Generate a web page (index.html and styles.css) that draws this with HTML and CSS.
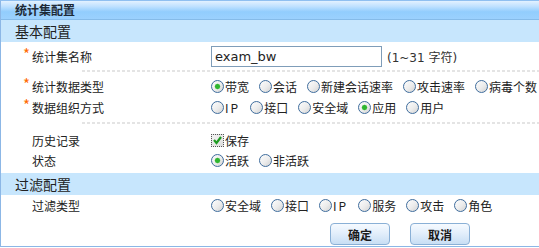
FILE: index.html
```html
<!DOCTYPE html>
<html lang="zh-CN">
<head>
	<meta charset="UTF-8">
	<title>统计集配置</title>
	<link rel="stylesheet" href="styles.css">
</head>
<body>
	<div class="panel">
		<div class="panel-title">统计集配置</div>
		<div class="section">基本配置</div>

		<div class="row row-name">
			<div class="label"><em>*</em>统计集名称</div>
			<div class="field">
				<input class="text" type="text" value="exam_bw">
				<span class="hint">(1~31 字符)</span>
			</div>
		</div>

		<div class="group">
			<div class="row">
				<div class="label"><em>*</em>统计数据类型</div>
				<div class="opts">
					<label class="opt"><input type="radio" name="t" checked>带宽</label>
					<label class="opt"><input type="radio" name="t">会话</label>
					<label class="opt"><input type="radio" name="t">新建会话速率</label>
					<label class="opt"><input type="radio" name="t">攻击速率</label>
					<label class="opt"><input type="radio" name="t">病毒个数</label>
				</div>
			</div>
			<div class="row">
				<div class="label"><em>*</em>数据组织方式</div>
				<div class="opts">
					<label class="opt"><input type="radio" name="o"><span class="ip">IP</span></label>
					<label class="opt"><input type="radio" name="o">接口</label>
					<label class="opt"><input type="radio" name="o">安全域</label>
					<label class="opt"><input type="radio" name="o" checked>应用</label>
					<label class="opt"><input type="radio" name="o">用户</label>
				</div>
			</div>
		</div>

		<div class="group group-last">
			<div class="row row-s">
				<div class="label"><em></em>历史记录</div>
				<div class="opts">
					<label class="opt">
						<span class="check"><svg width="11" height="11" viewBox="0 0 11 11"><polyline points="2,5 4.5,8 9,2" fill="none" stroke="#1f9c22" stroke-width="2.2"/></svg></span>保存
					</label>
				</div>
			</div>
			<div class="row row-s">
				<div class="label"><em></em>状态</div>
				<div class="opts">
					<label class="opt"><input type="radio" name="s" checked>活跃</label>
					<label class="opt"><input type="radio" name="s">非活跃</label>
				</div>
			</div>
		</div>

		<div class="section">过滤配置</div>
		<div class="row row-s">
			<div class="label"><em></em>过滤类型</div>
			<div class="opts">
				<label class="opt"><input type="radio" name="f">安全域</label>
				<label class="opt"><input type="radio" name="f">接口</label>
				<label class="opt"><input type="radio" name="f"><span class="ip">IP</span></label>
				<label class="opt"><input type="radio" name="f">服务</label>
				<label class="opt"><input type="radio" name="f">攻击</label>
				<label class="opt"><input type="radio" name="f">角色</label>
			</div>
		</div>

		<div class="actions">
			<button class="btn">确定</button>
			<button class="btn">取消</button>
		</div>
	</div>
</body>
</html>
```

FILE: styles.css
```css
body{
	margin: 0;
	background: #fff;
	font-family: "Noto Sans CJK SC", "Liberation Sans", sans-serif;
	font-size: 12px;
	color: #222;
}
.panel{
	width: 560px;
	border-top: 1px solid #8fbff0;
	border-left: 1px solid #8cb7e6;
	border-bottom: 1px solid #8cb7e6;
	overflow: hidden;
}
.panel-title{
	height: 18px;
	line-height: 18px;
	padding-left: 14px;
	font-weight: bold;
	color: #1e2a36;
	background: linear-gradient(#e2f1ff 0%, #bfe1ff 30%, #92cdfd 60%, #9bd1fe 100%);
	border-bottom: 1px solid #85bbe9;
}
.section{
	height: 22px;
	line-height: 22px;
	padding-left: 14px;
	font-size: 14px;
	color: #222;
	background: #c7e6fd;
}
.row{
	display: flex;
	align-items: center;
	height: 21px;
	white-space: nowrap;
}
.row-name{
	height: 28px;
}
.row-s{
	height: 20px;
}
.label{
	flex: none;
	width: 188px;
	padding-left: 22px;
	color: #222;
}
.label em{
	display: inline-block;
	width: 9px;
	font-style: normal;
	font-size: 15px;
	line-height: 12px;
	vertical-align: top;
	color: #ff6a00;
}
.field{
	display: flex;
	align-items: center;
}
.text{
	width: 163px;
	height: 19px;
	margin: 0;
	padding: 0 3px;
	border: 1px solid #7f9db9;
	font-family: "DejaVu Sans", sans-serif;
	font-size: 13px;
	color: #222;
	outline: none;
}
.hint{
	margin-left: 5px;
	font-family: "DejaVu Sans", "Noto Sans CJK SC", sans-serif;
	font-size: 12px;
	color: #333;
}
.group{
	padding: 4px 0;
}
.group::before{
	content: "";
	display: block;
	height: 2px;
	margin: -4px 0 4px 81px;
	background: repeating-linear-gradient(90deg, #e4e4e4 0 3px, transparent 3px 5px);
}
.group + .group::before{
	margin-bottom: 6px;
}
.group-last{
	padding-bottom: 3px;
}
.opts{
	display: flex;
	align-items: center;
	gap: 10px;
}
.opt{
	display: inline-flex;
	align-items: center;
	gap: 1px;
	color: #222;
}
.ip{
	letter-spacing: 2px;
}
.opt input[type=radio]{
	-webkit-appearance: none;
	appearance: none;
	width: 13px;
	height: 13px;
	margin: 0;
	border: 1px solid #3f6d9d;
	border-radius: 50%;
	background: linear-gradient(135deg, #fdfdfd 0%, #ececec 55%, #d2d2d2 100%);
	box-sizing: border-box;
}
.opt input[type=radio]:checked{
	background: radial-gradient(circle, #2fb52f 0 2px, #7cd17c 2.6px, transparent 3.2px), linear-gradient(135deg, #fdfdfd 0%, #ececec 55%, #d2d2d2 100%);
}
.check{
	display: inline-flex;
	align-items: center;
	justify-content: center;
	width: 11px;
	height: 11px;
	border: 1px dotted #555;
	background: linear-gradient(135deg, #f4f4f4, #dcdcdc);
}
.actions{
	display: flex;
	gap: 20px;
	padding: 8px 0 1px 329px;
}
.btn{
	width: 60px;
	height: 22px;
	padding: 0;
	border: 1px solid #8ab0d6;
	border-radius: 4px;
	background: linear-gradient(#f6faff 0%, #e3effb 45%, #c8def4 100%);
	font-family: "Noto Sans CJK SC", sans-serif;
	font-size: 12px;
	font-weight: bold;
	color: #1a1a1a;
}
```
